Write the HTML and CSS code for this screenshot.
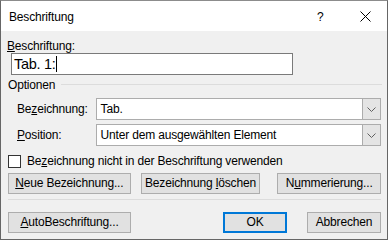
FILE: index.html
```html
<!DOCTYPE html>
<html lang="de">
<head>
<meta charset="utf-8">
<title>Beschriftung</title>
<link rel="stylesheet" href="styles.css">
</head>
<body>
<div class="window">
  <div class="titlebar">
    <span class="title">Beschriftung</span>
    <span class="help">?</span>
    <span class="close"><svg width="11" height="11" viewBox="0 0 11 11"><path d="M0.5 0.5 L10.5 10.5 M10.5 0.5 L0.5 10.5" stroke="#000" stroke-width="1" fill="none"/></svg></span>
  </div>
  <div class="content">
    <div class="caption-label"><u>B</u>eschriftung:</div>
    <div class="textbox"><span class="textbox-text">Tab. 1:</span><span class="caret"></span></div>
    <div class="group-head"><span class="group-title">Optionen</span><span class="group-line"></span></div>
    <div class="field-row">
      <span class="field-label">Be<u>z</u>eichnung:</span>
      <div class="combo"><span class="combo-text">Tab.</span><span class="combo-btn"><svg width="9" height="5" viewBox="0 0 9 5"><path d="M0.5 0.5 L4.5 4.5 L8.5 0.5" stroke="#606060" stroke-width="1" fill="none"/></svg></span></div>
    </div>
    <div class="field-row second">
      <span class="field-label"><u>P</u>osition:</span>
      <div class="combo"><span class="combo-text">Unter dem ausgewählten Element</span><span class="combo-btn"><svg width="9" height="5" viewBox="0 0 9 5"><path d="M0.5 0.5 L4.5 4.5 L8.5 0.5" stroke="#606060" stroke-width="1" fill="none"/></svg></span></div>
    </div>
    <div class="check-row"><span class="checkbox"></span><span class="check-text">Be<u>z</u>eichnung nicht in der Beschriftung verwenden</span></div>
    <div class="button-row first">
      <span class="btn w-neue"><u>N</u>eue Bezeichnung...</span>
      <span class="btn w-loeschen">Bezeichnung <u>l</u>öschen</span>
      <span class="btn w-nummer">N<u>u</u>mmerierung...</span>
    </div>
    <div class="separator"></div>
    <div class="button-row last">
      <span class="btn w-auto"><u>A</u>utoBeschriftung...</span>
      <span class="btn btn-default w-ok">OK</span>
      <span class="btn w-cancel">Abbrechen</span>
    </div>
  </div>
</div>
</body>
</html>
```

FILE: styles.css
```css
html, body {
  margin: 0;
  padding: 0;
  background: #ffffff;
}

body {
  font-family: "Liberation Sans", Arial, sans-serif;
  font-size: 12px;
  letter-spacing: -0.17px;
  color: #000;
}

.window {
  width: 386px;
  height: 238px;
  border: 1px solid #666666;
  border-top-color: #8c8c8c;
  display: flex;
  flex-direction: column;
  background: #f0f0f0;
}

.titlebar {
  height: 30px;
  flex: 0 0 30px;
  background: #ffffff;
  display: flex;
  align-items: center;
  padding: 0 16px 0 8px;
  line-height: 14px;
}

.title {
  flex: 1;
  padding-top: 1px;
}

.help {
  width: 7px;
  margin-right: 36px;
  padding-top: 1px;
}

.close {
  display: flex;
  width: 11px;
  height: 11px;
}

.content {
  flex: 1;
  padding: 8px 6px 0 6px;
  display: flex;
  flex-direction: column;
}

.caption-label {
  line-height: 14px;
  height: 14px;
}

.textbox {
  margin-top: 0;
  margin-left: 4px;
  width: 278px;
  height: 20px;
  border: 1px solid #7a7a7a;
  background: #ffffff;
  display: flex;
  align-items: center;
  padding-left: 2px;
  font-size: 14.5px;
  letter-spacing: -0.3px;
}

.caret {
  width: 1px;
  height: 16px;
  background: #000;
  margin-left: 1px;
}

.group-head {
  margin-top: 3px;
  height: 14px;
  line-height: 14px;
  display: flex;
  align-items: center;
  padding-left: 1px;
}

.group-title {
  margin-right: 6px;
}

.group-line {
  flex: 1;
  height: 1px;
  background: #dcdcdc;
  margin-right: -1px;
  margin-top: -1px;
}

.field-row {
  margin-top: 6px;
  display: flex;
  align-items: center;
  height: 22px;
}

.field-row.second {
  margin-top: 4px;
}

.field-label {
  width: 79px;
  padding-left: 10px;
}

.combo {
  width: 285px;
  height: 20px;
  border: 1px solid #acacac;
  background: #ffffff;
  display: flex;
  align-items: center;
}

.combo-text {
  flex: 1;
  padding-left: 4px;
}

.combo-btn {
  width: 17px;
  height: 20px;
  background: #e4e4e4;
  border-left: 1px solid #acacac;
  display: flex;
  align-items: center;
  justify-content: center;
}

.check-row {
  margin-top: 8px;
  display: flex;
  align-items: center;
  height: 14px;
  line-height: 14px;
}

.checkbox {
  width: 11px;
  height: 11px;
  border: 1px solid #333333;
  background: #ffffff;
  margin-left: 1px;
  margin-right: 6px;
}

.button-row {
  display: flex;
  align-items: center;
}

.button-row.first {
  margin-top: 5px;
}

.button-row.last {
  margin-top: 12px;
}

.btn {
  height: 19px;
  line-height: 19px;
  border: 1px solid #adadad;
  background: #e1e1e1;
  text-align: center;
  box-sizing: content-box;
}

.w-neue {
  width: 121px;
  margin-left: 1px;
}

.w-loeschen {
  width: 118px;
  margin-left: 10px;
}

.w-nummer {
  width: 102px;
  margin-left: 17px;
}

.w-auto {
  width: 121px;
  margin-left: 1px;
}

.btn-default {
  border: 2px solid #0078d7;
  height: 17px;
  line-height: 17px;
}

.w-ok {
  width: 60px;
  margin-left: auto;
}

.w-cancel {
  width: 72px;
  margin-left: 20px;
}

.separator {
  margin-top: 5px;
  margin-left: 1px;
  height: 1px;
  background: #dcdcdc;
}
```
